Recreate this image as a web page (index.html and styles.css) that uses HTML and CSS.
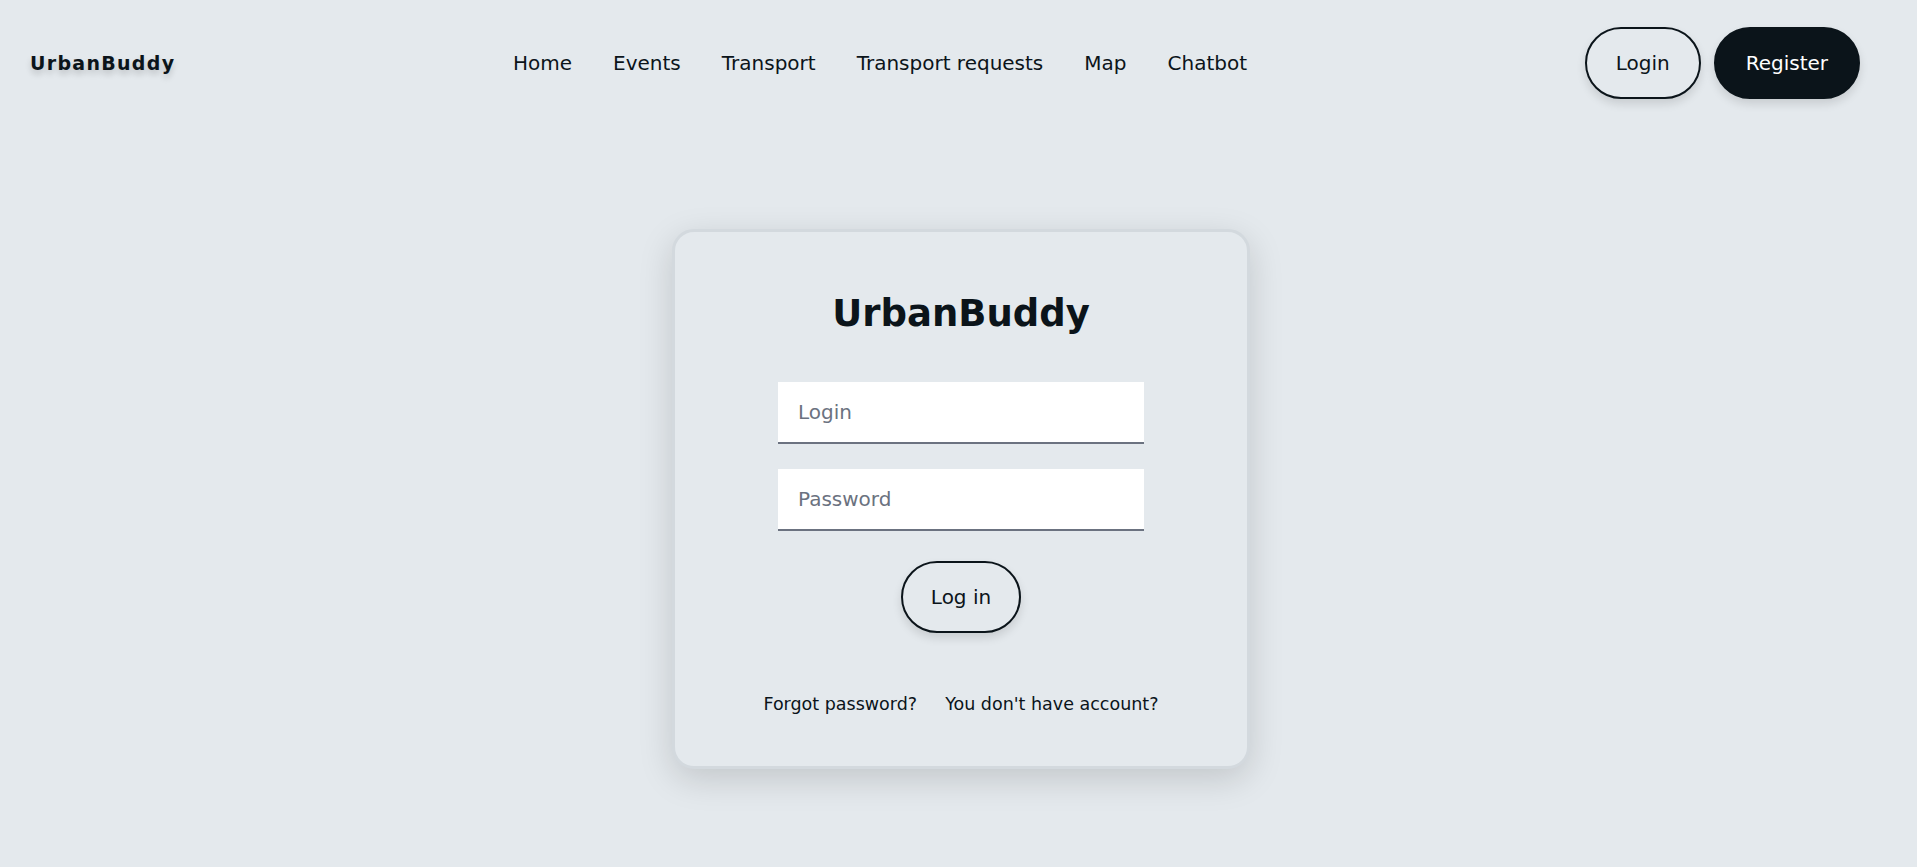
FILE: index.html
```html
<!DOCTYPE html>
<html lang="en">
<head>
<meta charset="utf-8">
<title>UrbanBuddy – Login</title>
<link rel="stylesheet" href="styles.css">
</head>
<body>
<header class="topbar">
  <a class="logo" href="#">UrbanBuddy</a>
  <nav class="nav">
    <a href="#">Home</a>
    <a href="#">Events</a>
    <a href="#">Transport</a>
    <a href="#">Transport requests</a>
    <a href="#">Map</a>
    <a href="#">Chatbot</a>
  </nav>
  <div class="actions">
    <button class="btn btn-outline btn-login" type="button">Login</button>
    <button class="btn btn-dark" type="button">Register</button>
  </div>
</header>
<main class="page">
  <form class="card">
    <h1 class="card-title">UrbanBuddy</h1>
    <input class="field field-first" type="text" placeholder="Login">
    <input class="field field-second" type="password" placeholder="Password">
    <button class="btn btn-outline btn-submit" type="button">Log in</button>
    <div class="links">
      <a href="#">Forgot password?</a>
      <a href="#">You don't have account?</a>
    </div>
  </form>
</main>
</body>
</html>
```
FILE: styles.css
```css
* {
  box-sizing: border-box;
}

html, body {
  margin: 0;
  padding: 0;
}

body {
  background: #e4e9ed;
  color: #0b141a;
  font-family: "DejaVu Sans", "Noto Sans", sans-serif;
  min-height: 867px;
}

a {
  color: inherit;
  text-decoration: none;
}

.topbar {
  display: flex;
  align-items: center;
  justify-content: space-between;
  padding: 27px 57px 0 30px;
}

.logo {
  font-size: 19px;
  font-weight: 700;
  letter-spacing: 1.3px;
  color: #0b141a;
  text-shadow: 0 4px 6px rgba(0, 0, 0, 0.18);
}

.nav {
  display: flex;
  gap: 41px;
  font-size: 20px;
}

.actions {
  display: flex;
  gap: 13px;
}

.btn {
  font-family: "DejaVu Sans", "Noto Sans", sans-serif;
  font-size: 20px;
  line-height: 30px;
  padding: 19px 30px;
  border: 2px solid #0b141a;
  border-radius: 40px;
  cursor: pointer;
  box-shadow: 0 5px 10px rgba(0, 0, 0, 0.12);
}

.btn-outline {
  background: #e4e9ed;
  color: #0b141a;
}

.btn-login {
  padding-left: 29px;
  padding-right: 29px;
}

.btn-dark {
  background: #0b141a;
  color: #ffffff;
}

.page {
  display: flex;
  justify-content: center;
  padding-top: 130px;
  padding-left: 5px;
}

.card {
  width: 578px;
  display: flex;
  flex-direction: column;
  align-items: center;
  padding: 60px 0 49px;
  background: #e4e9ed;
  border: 3px solid #d3d9de;
  border-radius: 22px;
  box-shadow: 0 10px 34px rgba(0, 0, 0, 0.15);
}

.card-title {
  margin: 0;
  font-size: 37px;
  line-height: 44px;
  font-weight: 700;
  color: #0b141a;
}

.field {
  width: 366px;
  height: 62px;
  padding: 0 20px;
  border: none;
  border-bottom: 2px solid #6b7280;
  background: #ffffff;
  font-family: "DejaVu Sans", "Noto Sans", sans-serif;
  font-size: 20px;
  color: #0b141a;
  outline: none;
}

.field::placeholder {
  color: #6b7280;
}

.field-first {
  margin-top: 46px;
}

.field-second {
  margin-top: 25px;
}

.btn-submit {
  margin-top: 30px;
  padding-left: 28px;
  padding-right: 28px;
}

.links {
  display: flex;
  gap: 28px;
  margin-top: 58px;
  font-size: 17.5px;
  line-height: 26px;
}
```
